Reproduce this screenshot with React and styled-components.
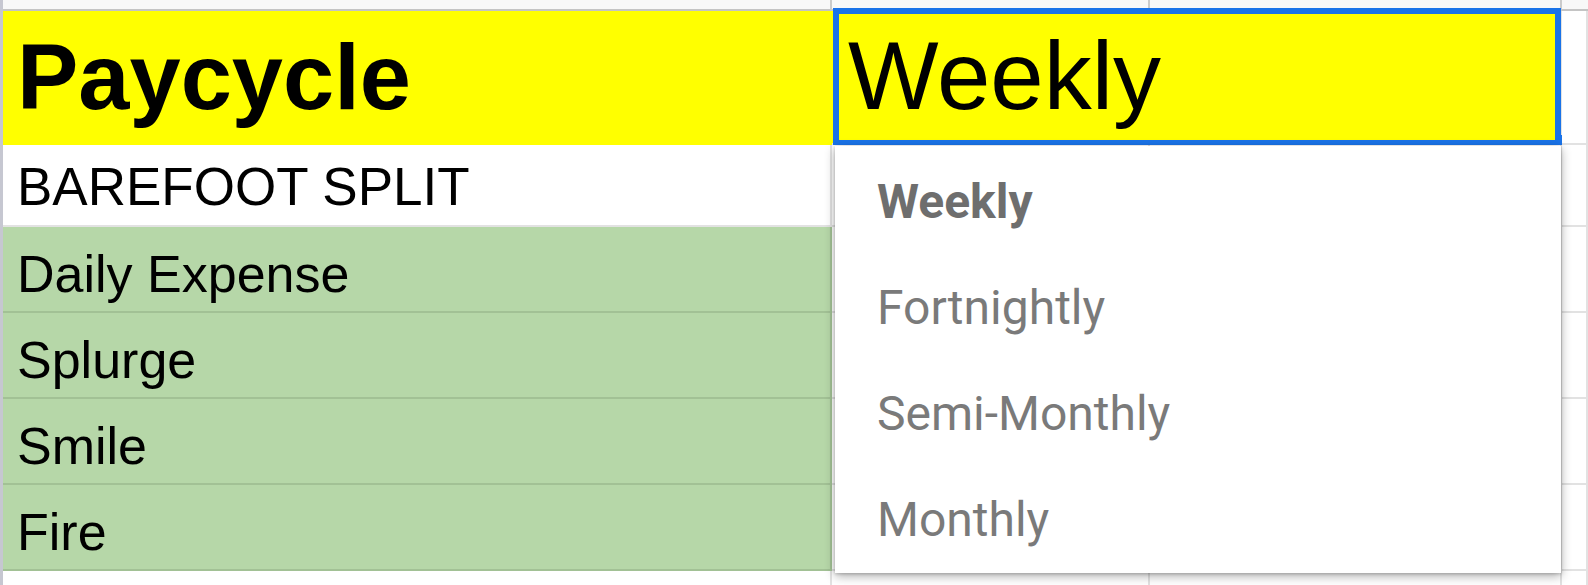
import styled, { createGlobalStyle } from "styled-components";

const GlobalStyle = createGlobalStyle`
  html, body {
    margin: 0;
    padding: 0;
    background: #fff;
    overflow: hidden;
  }
  * { box-sizing: border-box; }
`;

const COLS = "829px 318px 412px 1fr";

const Sheet = styled.div`
  width: 1588px;
  height: 585px;
  border-left: 3px solid #c6c7d1;
  font-family: "Liberation Sans", Arial, sans-serif;
  color: #000;
`;

const Row = styled.div`
  display: grid;
  grid-template-columns: ${COLS};
  height: ${({ $h }) => $h}px;
`;

const Cell = styled.div`
  position: relative;
  display: flex;
  align-items: flex-end;
  grid-column: span ${({ $span }) => $span || 1};
  background: ${({ $bg }) => $bg || "#fff"};
  border-bottom: 2px solid ${({ $line }) => $line || "#e2e2e2"};
  border-right: 2px solid ${({ $vline }) => $vline || "#e2e2e2"};
  padding: 0 0 ${({ $pb }) => $pb || 0}px ${({ $pl }) => $pl ?? 14}px;
`;

const HeadCell = styled.div`
  background: #f8f8f8;
  border-bottom: 2px solid #c4c4c4;
  border-right: 2px solid #cbcbcb;
`;

const CellText = styled.span`
  font-size: ${({ $size }) => $size}px;
  font-weight: ${({ $bold }) => ($bold ? 700 : 400)};
  line-height: 1;
  white-space: nowrap;
`;

const Selection = styled.div`
  position: absolute;
  top: -3px;
  left: 1px;
  right: -1px;
  bottom: -3px;
  border: 6px solid #1a73e8;
  pointer-events: none;
`;

const FillHandle = styled.div`
  position: absolute;
  right: -10px;
  bottom: -10px;
  width: 13px;
  height: 18px;
  background: #1a73e8;
`;

const Dropdown = styled.ul`
  position: absolute;
  top: calc(100% + 3px);
  left: 3px;
  width: 726px;
  margin: 0;
  padding: 3px 0 0;
  list-style: none;
  background: #fff;
  box-shadow: 0 3px 10px rgba(0, 0, 0, 0.32), 0 1px 3px rgba(0, 0, 0, 0.2);
  z-index: 5;
`;

const Option = styled.li`
  display: flex;
  align-items: center;
  height: 106px;
  padding-left: 42px;
  font-family: Roboto, "Noto Sans", sans-serif;
  font-size: 48px;
  line-height: 1;
  font-weight: ${({ $active }) => ($active ? 700 : 400)};
  color: ${({ $active }) => ($active ? "#6e6e6e" : "#7a7a7a")};
`;

const GREEN = "#b6d7a8";
const GREEN_LINE = "#a2c195";

const categories = ["Daily Expense", "Splurge", "Smile", "Fire"];
const options = ["Weekly", "Fortnightly", "Semi-Monthly", "Monthly"];

export default function App() {
  return (
    <>
      <GlobalStyle />
      <Sheet>
        <Row $h={11}>
          <HeadCell />
          <HeadCell />
          <HeadCell />
          <HeadCell style={{ borderRight: "none" }} />
        </Row>

        <Row $h={134}>
          <Cell $bg="#ffff00" $line="#ffff00" $vline="#ffff00" $pb={20}>
            <CellText $size={92} $bold>
              Paycycle
            </CellText>
          </Cell>
          <Cell $span={2} $bg="#ffff00" $line="#e2e2e2" $pb={19} $pl={16}>
            <CellText $size={96}>Weekly</CellText>
            <Selection />
            <FillHandle />
            <Dropdown>
              {options.map((o, i) => (
                <Option key={o} $active={i === 0}>
                  {o}
                </Option>
              ))}
            </Dropdown>
          </Cell>
          <Cell />
        </Row>

        <Row $h={82}>
          <Cell $pb={12}>
            <CellText $size={53}>BAREFOOT SPLIT</CellText>
          </Cell>
          <Cell />
          <Cell />
          <Cell />
        </Row>

        {categories.map((c) => (
          <Row $h={86} key={c}>
            <Cell $bg={GREEN} $line={GREEN_LINE} $vline={GREEN_LINE} $pb={11}>
              <CellText $size={52}>{c}</CellText>
            </Cell>
            <Cell />
            <Cell />
            <Cell />
          </Row>
        ))}

        <Row $h={20}>
          <Cell />
          <Cell />
          <Cell />
          <Cell />
        </Row>
      </Sheet>
    </>
  );
}
